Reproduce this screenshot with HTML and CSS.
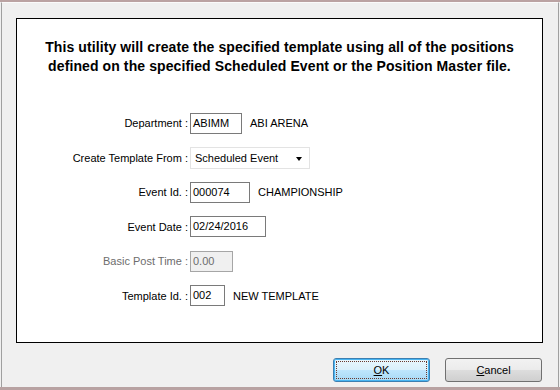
FILE: index.html
```html
<!DOCTYPE html>
<html lang="en">
<head>
    <meta charset="UTF-8">
    <title>Create Template</title>
    <link rel="stylesheet" href="styles.css">
</head>
<body>
    <div class="window">
        <div class="frame">
            <div class="panel">
                <p class="intro">This utility will create the specified template using all of the positions<br>defined on the specified Scheduled Event or the Position Master file.</p>

                <div class="form">
                    <label class="label">Department :</label>
                    <div class="field">
                        <span class="input w-dept">ABIMM</span>
                        <span class="desc">ABI ARENA</span>
                    </div>

                    <label class="label">Create Template From :</label>
                    <div class="field">
                        <span class="select">Scheduled Event<span class="arrow"></span></span>
                    </div>

                    <label class="label">Event Id. :</label>
                    <div class="field">
                        <span class="input w-event">000074</span>
                        <span class="desc">CHAMPIONSHIP</span>
                    </div>

                    <label class="label">Event Date :</label>
                    <div class="field">
                        <span class="input w-date">02/24/2016</span>
                    </div>

                    <label class="label disabled">Basic Post Time :</label>
                    <div class="field">
                        <span class="input w-time disabled">0.00</span>
                    </div>

                    <label class="label">Template Id. :</label>
                    <div class="field">
                        <span class="input w-tmpl">002</span>
                        <span class="desc">NEW TEMPLATE</span>
                    </div>
                </div>
            </div>

            <!-- 底部按鈕 -->
            <div class="buttons">
                <button class="btn default"><span class="focus-ring"><u>O</u>K</span></button>
                <button class="btn"><u>C</u>ancel</button>
            </div>
        </div>
    </div>
</body>
</html>
```

FILE: styles.css
```css
body {
    margin: 0;
    padding: 0;
    background-color: #f0f0f0;
    font-family: "Liberation Sans", Arial, sans-serif;
    font-size: 11px;
    color: #000;
}
.window {
    width: 560px;
    height: 390px;
    box-sizing: border-box;
    border-top: 2px solid #bba3a3;
    border-bottom: 3px solid #b8a2a2;
    background-color: #f0f0f0;
}
.frame {
    height: 100%;
    margin: 0 1px;
    border-left: 1px solid #a0a0a0;
    border-right: 1px solid #a0a0a0;
    border-top: 1px solid #fbfbfb;
    box-sizing: border-box;
    display: flex;
    flex-direction: column;
}
.panel {
    margin: 15px 0 0 14px;
    width: 527px;
    height: 325px;
    box-sizing: border-box;
    background-color: #fff;
    border: 1px solid #000;
}
.intro {
    margin: 19px 0 0;
    text-align: center;
    font-weight: bold;
    font-size: 14px;
    letter-spacing: 0.1px;
    line-height: 19px;
}
.form {
    display: grid;
    grid-template-columns: 171px auto;
    column-gap: 2px;
    row-gap: 12.5px;
    margin-top: 36px;
}
.label {
    height: 22px;
    line-height: 22px;
    text-align: right;
    white-space: nowrap;
}
.label.disabled {
    color: #6d6d6d;
}
.field {
    display: flex;
    align-items: center;
    gap: 7px;
    height: 22px;
}
.input {
    height: 21px;
    line-height: 19px;
    box-sizing: border-box;
    border: 1px solid #7a7a7a;
    padding-left: 2px;
    background-color: #fff;
}
.input.disabled {
    background-color: #f0f0f0;
    color: #6d6d6d;
    border-color: #a6a6a6;
}
.w-dept { width: 52px; }
.w-event { width: 60px; }
.w-date { width: 76px; }
.w-time { width: 43px; }
.w-tmpl { width: 35px; }
.desc {
    padding-left: 1px;
}
.select {
    position: relative;
    width: 120px;
    height: 22px;
    line-height: 20px;
    box-sizing: border-box;
    border: 1px solid #e3e3e3;
    padding-left: 4px;
}
.arrow {
    position: absolute;
    right: 7px;
    top: 9px;
    width: 0;
    height: 0;
    border-left: 3.5px solid transparent;
    border-right: 3.5px solid transparent;
    border-top: 4px solid #000;
}
.buttons {
    display: flex;
    justify-content: flex-end;
    gap: 15px;
    margin-top: 15px;
    padding-right: 16px;
}
.btn {
    width: 97px;
    height: 24px;
    padding: 0;
    font-family: "Liberation Sans", Arial, sans-serif;
    font-size: 11px;
    color: #000;
    border: 1px solid #707070;
    border-radius: 3px;
    background: linear-gradient(to bottom, #f2f2f2 0%, #ebebeb 50%, #dddddd 51%, #cfcfcf 100%);
}
.btn u {
    text-underline-offset: 1px;
}
.btn.default {
    border-color: #3c7fb1;
    box-shadow: inset 0 0 0 1px #48b5f2;
    background: linear-gradient(to bottom, #eaf6fd 0%, #d9f0fc 50%, #bee6fd 51%, #a7d9f5 100%);
    padding: 2px;
}
.focus-ring {
    display: block;
    height: 100%;
    box-sizing: border-box;
    line-height: 16px;
    border: 1px dotted #6a3a30;
}
```
